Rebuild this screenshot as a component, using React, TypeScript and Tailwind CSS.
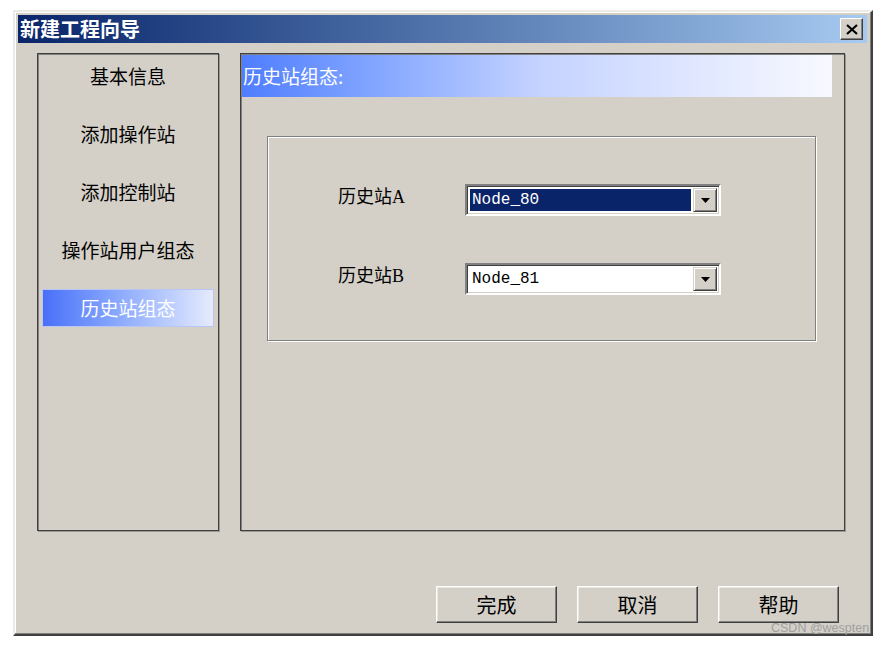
import React from 'react';

const navItems = ['基本信息', '添加操作站', '添加控制站', '操作站用户组态', '历史站组态'];

const cjk = "font-['Noto_Sans_CJK_SC',sans-serif]";

interface ComboProps {
  value: string;
  selected?: boolean;
}

const Combo: React.FC<ComboProps> = ({ value, selected }) => (
  <div className="flex h-[32px] w-[256px] items-center border-2 border-t-[#808080] border-l-[#808080] border-r-white border-b-white bg-white shadow-[inset_1px_1px_0_#404040,inset_-1px_-1px_0_#d4d0c8]">
    <div className="flex h-full flex-1 items-center py-[3px] pl-[3px]">
      <div
        className={`flex h-full w-full items-center pl-[2px] font-['Liberation_Mono',monospace] text-[16px] ${
          selected ? 'bg-[#0a246a] text-white' : 'text-black'
        }`}
      >
        {value}
      </div>
    </div>
    <div className="mx-[2px] flex h-[24px] w-[24px] items-center justify-center border border-t-[#d4d0c8] border-l-[#d4d0c8] border-r-[#404040] border-b-[#404040] bg-[#d4d0c8] shadow-[inset_1px_1px_0_#fff,inset_-1px_-1px_0_#808080]">
      <svg width="9" height="5" viewBox="0 0 9 5">
        <path d="M0 0h9L4.5 5z" fill="#000" />
      </svg>
    </div>
  </div>
);

const Button: React.FC<{ label: string }> = ({ label }) => (
  <button
    className={`flex h-[37px] w-[121px] items-center justify-center border border-t-white border-l-white border-r-[#404040] border-b-[#404040] bg-[#d4d0c8] text-[20px] text-black shadow-[inset_-1px_-1px_0_#808080,inset_1px_1px_0_#e8e6e0] ${cjk}`}
  >
    {label}
  </button>
);

export default function App() {
  return (
    <div className="relative h-[646px] w-[883px] overflow-hidden bg-white pl-[13px] pt-[10px]">
      <div className="flex h-[626px] w-[860px] flex-col border-2 border-t-[#ecebe7] border-l-[#ecebe7] border-r-[#404040] border-b-[#404040] bg-[#d4d0c8] p-[3px] shadow-[inset_-1px_-1px_0_#808080,inset_1px_1px_0_#fff]">
        {/* title bar */}
        <div className="flex h-[28px] w-[849px] shrink-0 items-center justify-between bg-gradient-to-r from-[#0a246a] to-[#a6caf0] pl-[2px] pr-[4px]">
          <span className={`text-[20px] font-bold leading-none text-white ${cjk}`}>新建工程向导</span>
          <button className="flex h-[22px] w-[23px] items-center justify-center border border-t-white border-l-white border-r-[#404040] border-b-[#404040] bg-[#d4d0c8] shadow-[inset_-1px_-1px_0_#808080]">
            <svg width="12" height="11" viewBox="0 0 12 11">
              <path d="M1 1l10 9M11 1L1 10" stroke="#000" strokeWidth="2.2" />
            </svg>
          </button>
        </div>

        {/* body */}
        <div className="flex gap-[21px] pl-[19px] pt-[10px]">
          <div className="flex h-[478px] w-[182px] flex-col gap-[20px] border border-[#404040] px-[4px] pt-[3px] shadow-[inset_1px_1px_0_#808080,1px_1px_0_#9a9893]">
            {navItems.map((item, i) => {
              const active = i === navItems.length - 1;
              return (
                <div
                  key={item}
                  className={`flex h-[38px] items-center justify-center text-[19px] ${cjk} ${
                    active
                      ? 'border border-[#b8c6f4] bg-gradient-to-r from-[#4a6ff8] to-[#e6ebfc] text-white'
                      : 'text-black'
                  }`}
                >
                  {item}
                </div>
              );
            })}
          </div>

          <div className="flex h-[478px] w-[605px] flex-col border border-[#404040] pl-[1px] pt-[1px] shadow-[inset_1px_1px_0_#808080,1px_1px_0_#9a9893]">
            <div className="flex h-[42px] w-[590px] items-center bg-gradient-to-r from-[#4f7dff] via-[#c4d2ff] to-[#f8f9ff]">
              <span className={`pl-[1px] text-[19px] text-white ${cjk}`}>历史站组态:</span>
            </div>

            <div className="ml-[25px] mt-[39px] flex h-[205px] w-[549px] flex-col gap-[47px] border border-[#808080] pl-[70px] pt-[47px] shadow-[inset_1px_1px_0_#fff,1px_1px_0_#fff]">
              <div className="flex items-center">
                <span className="w-[127px] pb-[5px] font-['Liberation_Serif','Noto_Sans_CJK_SC',serif] text-[18px] text-black">
                  历史站A
                </span>
                <Combo value="Node_80" selected />
              </div>
              <div className="flex items-center">
                <span className="w-[127px] pb-[5px] font-['Liberation_Serif','Noto_Sans_CJK_SC',serif] text-[18px] text-black">
                  历史站B
                </span>
                <Combo value="Node_81" />
              </div>
            </div>
          </div>
        </div>

        {/* buttons */}
        <div className="mt-[55px] flex justify-end gap-[20px] pr-[29px]">
          <Button label="完成" />
          <Button label="取消" />
          <Button label="帮助" />
        </div>
      </div>

      <span className="absolute left-[771px] top-[619px] font-['Liberation_Sans',sans-serif] text-[12.5px] text-[#a0a0a0]">
        CSDN @wespten
      </span>
    </div>
  );
}
